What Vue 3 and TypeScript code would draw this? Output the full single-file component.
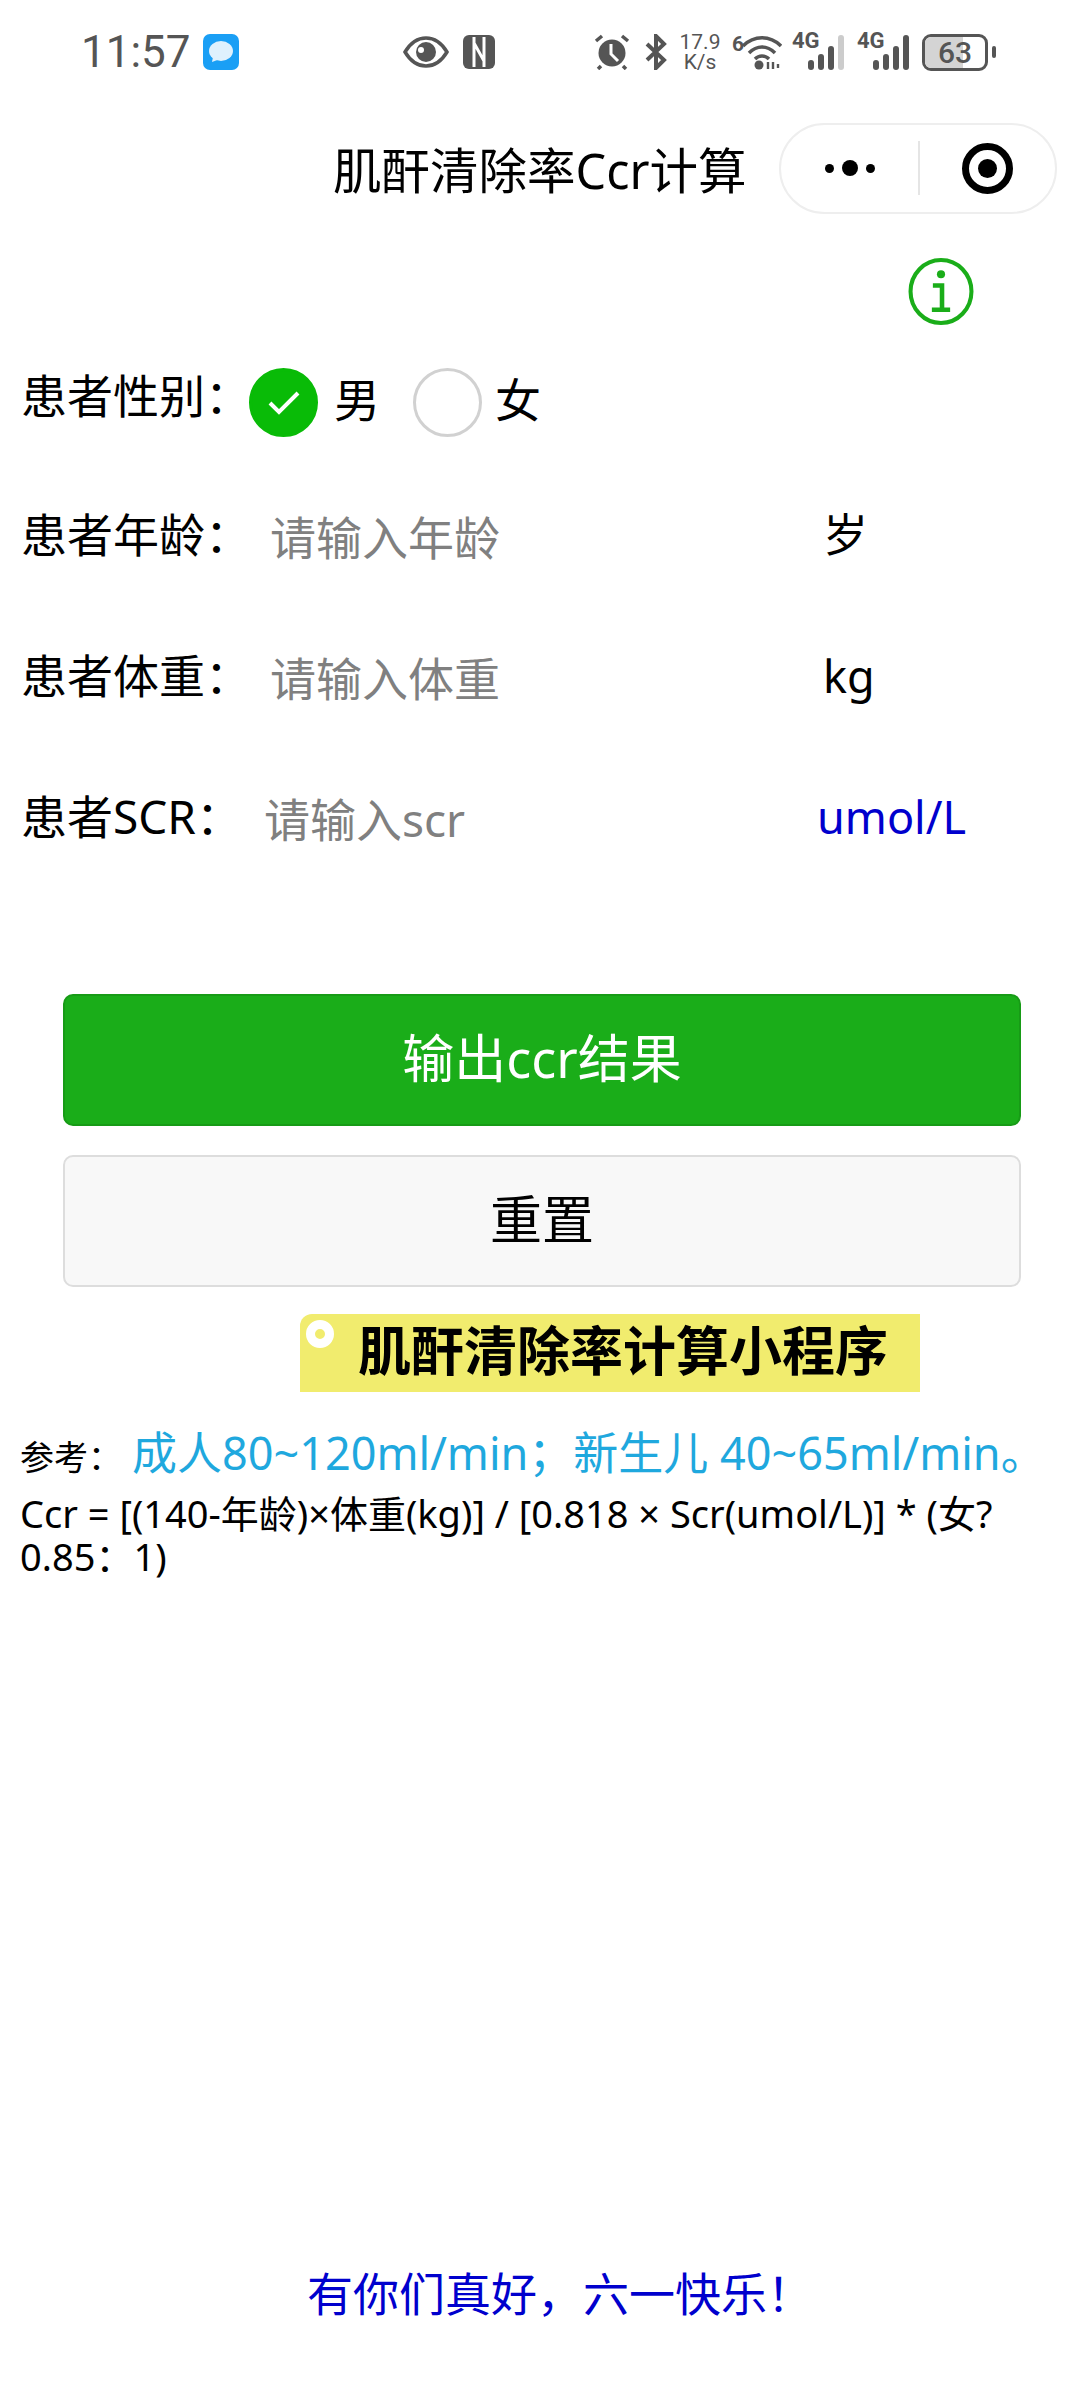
<script setup lang="ts">
interface Row {
  label: string;
  placeholder: string;
  unit: string;
  blue?: boolean;
  narrow?: boolean;
}

const rows: Row[] = [
  { label: "患者年龄\uFF1A", placeholder: "请输入年龄", unit: "岁" },
  { label: "患者体重\uFF1A", placeholder: "请输入体重", unit: "kg" },
  { label: "患者SCR\uFF1A", placeholder: "请输入scr", unit: "umol/L", blue: true, narrow: true },
];
</script>

<template>
  <div class="page">
    <div class="status">
      <span class="time">11:57</span>
      <svg class="msg" width="36" height="36" viewBox="0 0 36 36">
        <rect width="36" height="36" rx="7" fill="#1a9ff5" />
        <ellipse cx="18" cy="17" rx="12" ry="10" fill="#dff1fd" />
        <path d="M10 23l-1 5 8-3z" fill="#dff1fd" />
      </svg>
      <svg class="eye" width="46" height="32" viewBox="0 0 46 32">
        <path d="M2 16C8 6 15 2 23 2s15 4 21 14c-6 10-13 14-21 14S8 26 2 16z" fill="none" stroke="#555" stroke-width="3.5" />
        <circle cx="23" cy="16" r="10" fill="#555" />
        <circle cx="18" cy="14" r="3" fill="#fff" />
      </svg>
      <svg class="nfc" width="32" height="34" viewBox="0 0 32 34">
        <rect width="32" height="34" rx="6" fill="#555" />
        <path d="M11 2v30M21 2v30M11 8l10 18" stroke="#fff" stroke-width="3" fill="none" />
      </svg>
      <svg class="alarm" width="36" height="36" viewBox="0 0 36 36">
        <circle cx="18" cy="19" r="13.5" fill="#555" />
        <path d="M2 7l6-5M34 7l-6-5M7 32l-3 3M29 32l3 3" stroke="#555" stroke-width="3.5" fill="none" />
        <path d="M17 10v10l7 7" stroke="#fff" stroke-width="3" fill="none" />
      </svg>
      <svg class="bt" width="22" height="36" viewBox="0 0 22 36">
        <path d="M2 10l17 16-8 8V2l8 8L2 26" stroke="#555" stroke-width="4" fill="none" />
      </svg>
      <div class="speed"><span>17.9</span><span>K/s</span></div>
      <span class="six">6</span>
      <svg class="wifi" width="40" height="36" viewBox="0 0 40 36">
        <path d="M1 12C12 1 28 1 39 12M7 19C15 11 25 11 33 19M13 25c4-4 10-4 14 0" stroke="#555" stroke-width="3.5" fill="none" />
        <circle cx="17" cy="31" r="4.5" fill="#555" />
        <path d="M26 28v7M31 28v7M36 30v4" stroke="#555" stroke-width="2.4" />
      </svg>
      <div class="signal first">
        <span class="g">4G</span>
        <i style="height: 10px"></i><i style="height: 16px"></i><i style="height: 24px"></i><i style="height: 35px; background: #ccc"></i>
      </div>
      <div class="signal">
        <span class="g">4G</span>
        <i style="height: 10px"></i><i style="height: 16px"></i><i style="height: 24px"></i><i style="height: 35px"></i>
      </div>
      <div class="battery"><span class="level"></span><span class="pct">63</span></div>
      <span class="nub"></span>
    </div>

    <div class="nav">
      <span class="title">肌酐清除率Ccr计算</span>
      <div class="capsule">
        <div class="dots"><i></i><i class="big"></i><i></i></div>
        <span class="sep"></span>
        <div class="target"><i></i></div>
      </div>
    </div>

    <div class="info-line">
      <svg width="66" height="67" viewBox="0 0 64 66">
        <ellipse cx="32" cy="33" rx="30" ry="31" fill="none" stroke="#1aad19" stroke-width="4" />
        <circle cx="32" cy="16" r="4" fill="#1aad19" />
        <path d="M24 27h9v23M23 51h18" stroke="#1aad19" stroke-width="4.5" fill="none" />
      </svg>
    </div>

    <div class="gender">
      <span class="label">患者性别&#xFF1A;</span>
      <span class="radio on">
        <svg width="32" height="26" viewBox="0 0 32 26"><path d="M2 13l9 9L30 3" stroke="#fff" stroke-width="4" fill="none" /></svg>
      </span>
      <span class="opt">男</span>
      <span class="radio"></span>
      <span class="opt">女</span>
    </div>

    <div v-for="row in rows" :key="row.label" class="row">
      <span class="label" :class="{ short: row.narrow }">{{ row.label }}</span>
      <span class="holder">{{ row.placeholder }}</span>
      <span class="unit" :class="{ blue: row.blue }">{{ row.unit }}</span>
    </div>

    <div class="buttons">
      <div class="btn primary">输出ccr结果</div>
      <div class="btn">重置</div>
    </div>

    <div class="tag-line">
      <div class="tag"><i class="hole"></i>肌酐清除率计算小程序</div>
    </div>

    <div class="refs">
      <div class="ref"><span class="ref-head">参考&#xFF1A;</span><span class="ref-val">成人80~120ml/min&#xFF1B;新生儿 40~65ml/min。</span></div>
      <div class="formula">Ccr = [(140-年龄)×体重(kg)] / [0.818 × Scr(umol/L)] * (女? 0.85&#xFF1A;1)</div>
    </div>

    <div class="footer">有你们真好&#xFF0C;六一快乐&#xFF01;</div>
  </div>
</template>

<style scoped>
.page {
  width: 1080px;
  height: 2390px;
  background: #fff;
  color: #000;
  display: flex;
  flex-direction: column;
  font-family: "Noto Sans", "Noto Sans CJK SC", sans-serif;
  overflow: hidden;
}

.status {
  height: 106px;
  padding: 34px 0 0 81px;
  box-sizing: border-box;
  display: flex;
  align-items: flex-start;
  color: #555;
  font-family: Roboto, sans-serif;
}
.time {
  font-size: 44px;
  line-height: 36px;
  width: 122px;
}
.eye { margin: 2px 0 0 164px; }
.nfc { margin: 1px 0 0 14px; }
.alarm { margin: 0 0 0 99px; }
.bt { margin: 0 0 0 15px; }
.speed {
  width: 44px;
  margin: -2px 0 0 11px;
  display: flex;
  flex-direction: column;
  align-items: center;
  font-size: 21px;
  line-height: 20px;
}
.six { width: 10px; font-size: 21px; font-weight: 700; line-height: 20px; margin: 0 0 0 10px; }
.signal {
  position: relative;
  width: 52px;
  height: 36px;
  margin-left: 13px;
  display: flex;
  align-items: flex-end;
  justify-content: flex-end;
  gap: 4px;
}
.signal.first { margin-left: 10px; }
.signal i { width: 6px; background: #555; border-radius: 3px; }
.signal .g {
  position: absolute;
  left: 0;
  top: -3px;
  font-size: 22px;
  font-weight: 700;
  line-height: 20px;
}
.battery {
  position: relative;
  width: 66px;
  height: 37px;
  margin-left: 13px;
  border: 3px solid #555;
  border-radius: 9px;
  box-sizing: border-box;
  overflow: hidden;
  display: flex;
  align-items: center;
  justify-content: center;
}
.level { position: absolute; left: 0; top: 0; bottom: 0; width: 63%; background: #d4d4d4; }
.pct { position: relative; font-size: 30px; font-weight: 500; }
.nub { width: 4px; height: 12px; margin: 12px 0 0 4px; background: #555; border-radius: 2px; }

.nav {
  height: 124px;
  padding: 0 23px 0 333px;
  box-sizing: border-box;
  display: flex;
  align-items: center;
  justify-content: space-between;
}
.title { font-size: 48.5px; line-height: 60px; white-space: nowrap; padding-top: 4px; }
.capsule {
  width: 278px;
  height: 91px;
  border: 2px solid #eee;
  border-radius: 46px;
  box-sizing: border-box;
  display: flex;
  align-items: center;
}
.dots { width: 137px; display: flex; align-items: center; justify-content: center; gap: 8px; }
.dots i { width: 9px; height: 9px; background: #000; border-radius: 50%; }
.dots i.big { width: 16px; height: 16px; }
.sep { width: 2px; height: 54px; background: #e5e5e5; }
.target { flex: 1; display: flex; justify-content: center; }
.target i {
  width: 51px;
  height: 51px;
  border: 7px solid #000;
  border-radius: 50%;
  box-sizing: border-box;
  display: flex;
  align-items: center;
  justify-content: center;
}
.target i::after { content: ""; width: 19px; height: 19px; background: #000; border-radius: 50%; }

.info-line {
  display: flex;
  justify-content: flex-end;
  padding: 28px 106px 0 0;
}

.gender {
  display: flex;
  align-items: center;
  height: 69px;
  margin-top: 43px;
  padding-left: 21px;
}
.label { font-size: 46px; line-height: 60px; width: 228px; white-space: nowrap; }
.gender .label { padding-bottom: 16px; }
.radio {
  width: 69px;
  height: 69px;
  border: 3px solid #d1d1d1;
  border-radius: 50%;
  box-sizing: border-box;
  display: flex;
  align-items: center;
  justify-content: center;
}
.radio.on { background: #09bb07; border-color: #09bb07; }
.opt { font-size: 46px; line-height: 60px; padding-bottom: 8px; margin: 0 33px 0 16px; }
.opt:last-child { margin-left: 13px; }

.row {
  display: flex;
  align-items: center;
  height: 60px;
  padding-left: 21px;
  margin-top: 81px;
}
.gender + .row { margin-top: 70px; }
.row .label { width: 249px; padding-bottom: 6px; }
.row .label.short { width: 243px; }
.holder { width: 553px; font-size: 46px; color: #808080; line-height: 60px; }
.unit { font-size: 45px; line-height: 60px; padding-bottom: 4px; }
.unit.blue { color: #0000cd; }

.buttons {
  padding: 0 59px 0 63px;
  margin-top: 145px;
  display: flex;
  flex-direction: column;
  gap: 29px;
}
.btn {
  height: 132px;
  border: 2px solid #ddd;
  border-radius: 10px;
  box-sizing: border-box;
  background: #f8f8f8;
  font-size: 52px;
  padding-bottom: 10px;
  display: flex;
  align-items: center;
  justify-content: center;
}
.btn.primary { background: #1aad19; border-color: #179b16; color: #fff; }

.tag-line { padding-left: 300px; margin-top: 27px; }
.tag {
  position: relative;
  width: 620px;
  height: 78px;
  padding-left: 58px;
  box-sizing: border-box;
  background: #f1ec6e;
  border-top-left-radius: 12px;
  font-size: 53px;
  font-weight: 700;
  line-height: 74px;
  white-space: nowrap;
}
.hole {
  position: absolute;
  left: 6px;
  top: 6px;
  width: 28px;
  height: 28px;
  border: 9px solid #fff;
  border-radius: 50%;
  box-sizing: border-box;
}

.refs { padding: 26px 20px 0 20px; }
.ref { display: flex; align-items: baseline; white-space: nowrap; }
.ref-head { font-size: 34px; width: 112px; }
.ref-val { font-size: 45px; color: #1fa8de; }
.formula { font-size: 38px; line-height: 43px; margin-top: 9px; }

.footer {
  margin-top: auto;
  padding: 0 0 67px 40px;
  text-align: center;
  font-size: 46px;
  line-height: 60px;
  color: #0000cd;
}
</style>

<style>
html, body { margin: 0; background: #fff; }
</style>
